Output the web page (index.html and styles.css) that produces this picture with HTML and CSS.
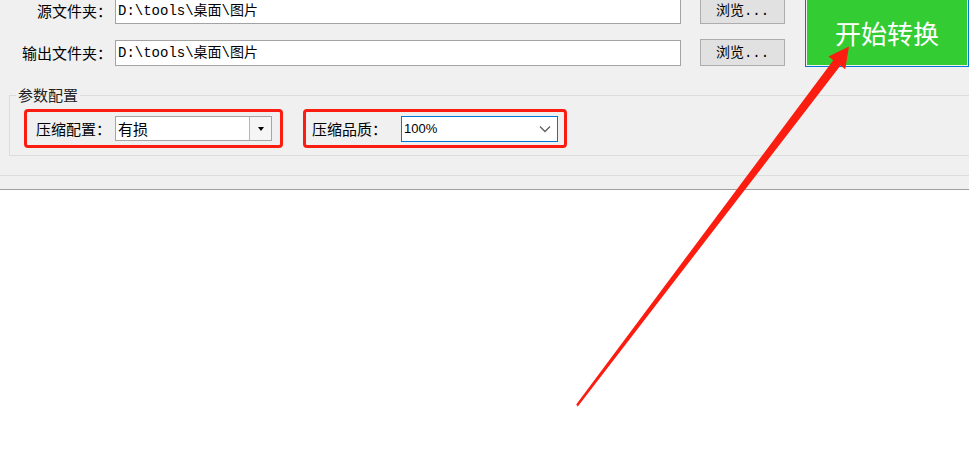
FILE: index.html
```html
<!DOCTYPE html>
<html lang="zh-CN">
<head>
<meta charset="utf-8">
<title>图片压缩</title>
<link rel="stylesheet" href="styles.css">
</head>
<body>
<div class="window">
  <div class="top">
    <div class="files">
      <div class="row">
        <label class="lbl">源文件夹：</label>
        <div class="input">D:\tools\桌面\图片</div>
        <button class="browse">浏览...</button>
      </div>
      <div class="row">
        <label class="lbl">输出文件夹：</label>
        <div class="input">D:\tools\桌面\图片</div>
        <button class="browse">浏览...</button>
      </div>
    </div>
    <button class="start">开始转换</button>
  </div>
  <fieldset class="group">
    <legend>参数配置</legend>
    <div class="opts">
      <div class="hl hl1">
        <span class="olbl">压缩配置：</span>
        <div class="combo">
          <span class="val">有损</span>
          <span class="drop"><span class="tri"></span></span>
        </div>
      </div>
      <div class="hl hl2">
        <span class="olbl">压缩品质：</span>
        <div class="combo2">
          <span class="val2">100%</span>
          <svg class="chev" width="12" height="8" viewBox="0 0 12 8"><polyline points="1,1.5 6,6.5 11,1.5" fill="none" stroke="#606060" stroke-width="1.3"/></svg>
        </div>
      </div>
    </div>
  </fieldset>
  <div class="status"></div>
</div>
<svg class="arrow" width="969" height="476" viewBox="0 0 969 476">
  <polygon points="576.2,404.4 833.3,60.2 828.5,56.5 849,46.5 845.2,69.2 840.5,65.6 577.8,406.6" fill="#fb1d10"/>
</svg>
</body>
</html>
```
FILE: styles.css
```css
html, body {
  margin: 0;
  padding: 0;
}
body {
  background: #ffffff;
  font-family: "Noto Sans CJK SC", "Microsoft YaHei", sans-serif;
  font-size: 15px;
  color: #000;
  overflow: hidden;
  position: relative;
  width: 969px;
  height: 476px;
}
.window {
  background: #f0f0f0;
  height: 189px;
  border-bottom: 1px solid #a0a0a0;
  overflow: hidden;
}
.top {
  display: flex;
  align-items: flex-start;
  margin-top: -4px;
  height: 71px;
}
.files {
  display: flex;
  flex-direction: column;
  gap: 15px;
  padding-top: 1px;
}
.row {
  display: flex;
  align-items: center;
  height: 27px;
}
.lbl {
  width: 115px;
  box-sizing: border-box;
  padding-right: 3px;
  text-align: right;
  font-size: 15px;
  line-height: 20px;
  white-space: nowrap;
}
.input {
  width: 566px;
  height: 26px;
  box-sizing: border-box;
  border: 1px solid #a3a3a3;
  background: #fff;
  font-family: "Liberation Mono", "Noto Sans CJK SC", monospace;
  font-size: 14px;
  line-height: 24px;
  padding-left: 2px;
  white-space: nowrap;
}
.browse {
  margin-left: 19px;
  width: 85px;
  height: 27px;
  box-sizing: border-box;
  border: 1px solid #adadad;
  background: #e1e1e1;
  font-family: "Liberation Mono", "Noto Sans CJK SC", monospace;
  font-size: 14px;
  color: #000;
  padding: 0;
  line-height: 20px;
}
.start {
  margin-left: 20px;
  width: 164px;
  height: 71px;
  box-sizing: border-box;
  border: 1px solid #0078d7;
  padding: 3px 1px 1px 1px;
  background: #33cc33 content-box;
  color: #ffffff;
  font-family: "Noto Sans CJK SC", sans-serif;
  font-size: 26px;
  line-height: 34px;
  font-weight: 400;
}
.group {
  margin: 20px 0 0 9px;
  padding: 6px 0 7px 6px;
  border: 1px solid #dcdcdc;
  border-right: none;
  min-width: 0;
}
.group legend {
  padding: 0 2px;
  font-size: 15px;
  line-height: 16px;
  color: #222;
}
.opts {
  display: flex;
  gap: 20px;
  margin-left: 8px;
}
.hl {
  display: flex;
  align-items: center;
  height: 39px;
  box-sizing: border-box;
  border: 3px solid #fb1d12;
  border-radius: 4px;
}
.hl1 {
  width: 259px;
  padding-left: 9px;
}
.hl2 {
  width: 264px;
  padding-left: 6px;
}
.olbl {
  width: 75px;
  white-space: nowrap;
  font-size: 15px;
  line-height: 20px;
}
.combo {
  margin-left: 4px;
  width: 157px;
  height: 25px;
  box-sizing: border-box;
  border: 1px solid #a5a5a5;
  background: #fff;
  display: flex;
}
.val {
  flex: 1;
  padding-left: 2px;
  font-size: 15px;
  line-height: 23px;
}
.drop {
  width: 21px;
  border-left: 1px solid #b5b5b5;
  background: #f5f5f5;
  display: flex;
  align-items: center;
  justify-content: center;
}
.tri {
  width: 0;
  height: 0;
  border-left: 3.5px solid transparent;
  border-right: 3.5px solid transparent;
  border-top: 4px solid #000;
}
.combo2 {
  margin-left: 14px;
  width: 157px;
  height: 26px;
  box-sizing: border-box;
  border: 1px solid #0078d7;
  background: #fff;
  display: flex;
  align-items: center;
  justify-content: space-between;
  padding: 0 6px 0 2px;
}
.val2 {
  font-family: "Liberation Sans", sans-serif;
  font-size: 13px;
}
.chev {
  display: block;
}
.status {
  margin-top: 19px;
  border-top: 1px solid #dcdcdc;
}
.arrow {
  position: absolute;
  left: 0;
  top: 0;
  pointer-events: none;
}
```
